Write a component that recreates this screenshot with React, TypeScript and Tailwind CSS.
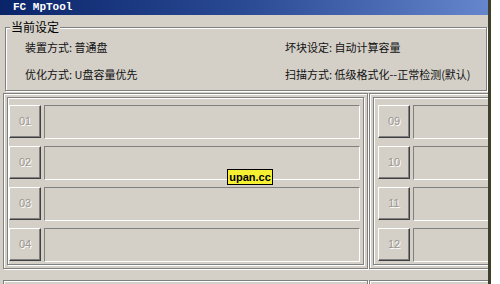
import React from "react";

const cjk = "font-['Noto_Sans_CJK_SC','Liberation_Sans',sans-serif]";
const etched = "border border-[#808080] shadow-[inset_1px_1px_0_#fff,1px_1px_0_#fff]";

function Btn({ n }: { n: string }) {
  return (
    <div className="w-[32px] h-[33px] shrink-0 flex items-center justify-center border border-t-white border-l-white border-r-[#404040] border-b-[#404040] shadow-[inset_-1px_-1px_0_#808080] text-[11px] text-[#9a968e] [text-shadow:1px_1px_0_#fff] font-['Liberation_Sans',sans-serif]">
      {n}
    </div>
  );
}

function Row({ n }: { n: string }) {
  return (
    <div className="flex gap-[3px] items-start">
      <Btn n={n} />
      <div className="flex-1 h-[34px] border border-t-[#808080] border-l-[#808080] border-r-white border-b-white" />
    </div>
  );
}

function Panel({ nums, w, pl }: { nums: string[]; w: string; pl: string }) {
  return (
    <div className={`${w} h-[176px] shrink-0 ${etched} p-[3px]`}>
      <div className={`h-full ${etched} ${pl} pr-[3px] pt-[7px] flex flex-col gap-[7px]`}>
        {nums.map((n) => (
          <Row key={n} n={n} />
        ))}
      </div>
    </div>
  );
}

function EmptyPanel({ w }: { w: string }) {
  return (
    <div className={`${w} h-[40px] shrink-0 ${etched} p-[3px]`}>
      <div className={`h-full ${etched}`} />
    </div>
  );
}

export default function App() {
  return (
    <div className="w-[500px] h-[284px] bg-white flex overflow-hidden relative">
      <div className="w-[488px] h-full bg-[#d4d0c8] shrink-0 flex flex-col overflow-hidden">
        <div className="h-[15px] shrink-0 bg-gradient-to-r from-[#0a246a] via-[#2a4a94] to-[#6585cc] pl-[13px] text-white text-[11px] leading-[15px] font-bold font-['Liberation_Mono',monospace]">
          FC MpTool
        </div>
        <div className={`relative ml-[5px] mr-[1px] mt-[12px] h-[64px] shrink-0 ${etched}`}>
          <div className={`absolute left-[4px] top-[-9px] bg-[#d4d0c8] px-[1px] text-[12px] leading-[16px] text-black ${cjk}`}>
            当前设定
          </div>
          <div className={`grid grid-cols-[260px_1fr] gap-y-[11px] pl-[19px] pt-[11px] text-[11px] leading-[16px] text-[#111] ${cjk}`}>
            <div>装置方式: 普通盘</div>
            <div>坏块设定: 自动计算容量</div>
            <div>优化方式: U盘容量优先</div>
            <div>扫描方式: 低级格式化--正常检测(默认)</div>
          </div>
        </div>
        <div className="flex gap-[1px] ml-[3px] mt-[2px] shrink-0">
          <Panel nums={["01", "02", "03", "04"]} w="w-[365px]" pl="pl-[1px]" />
          <Panel nums={["09", "10", "11", "12"]} w="w-[200px]" pl="pl-[4px]" />
        </div>
        <div className="flex gap-[1px] ml-[3px] mt-[11px] shrink-0">
          <EmptyPanel w="w-[365px]" />
          <EmptyPanel w="w-[200px]" />
        </div>
      </div>
      <div className="w-[3px] h-full bg-[#3f3f2a] shrink-0" />
      <div className="absolute left-[227px] top-[169px] w-[46px] h-[16px] bg-[#f6f032] border border-black flex items-center justify-center text-[11px] font-bold text-black font-['Liberation_Sans',sans-serif] leading-none">
        upan.cc
      </div>
    </div>
  );
}
